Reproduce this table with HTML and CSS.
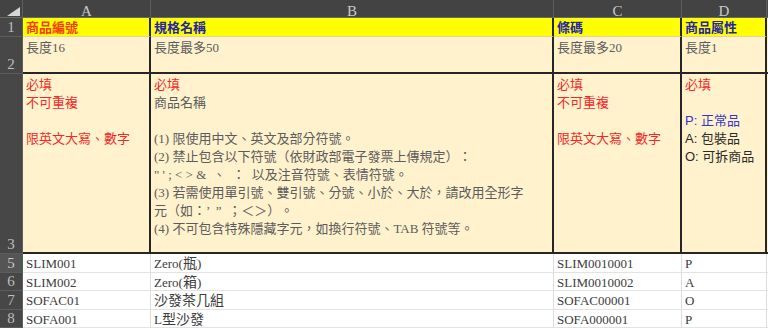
FILE: index.html
```html
<!DOCTYPE html>
<html lang="zh-Hant">
<head>
<meta charset="utf-8">
<title>商品規格</title>
<link rel="stylesheet" href="styles.css">
</head>
<body>
<div class="sheet">
  <div class="corner"><span class="tri"></span></div>
  <div class="ch">A</div>
  <div class="ch">B</div>
  <div class="ch">C</div>
  <div class="ch">D</div>
  <div class="ch last"></div>

  <div class="rh">1</div>
  <div class="y orange">商品編號</div>
  <div class="y blue">規格名稱</div>
  <div class="y blue">條碼</div>
  <div class="y blue">商品屬性</div>
  <div class="y end"></div>

  <div class="rh">2</div>
  <div class="b">長度16</div>
  <div class="b">長度最多50</div>
  <div class="b">長度最多20</div>
  <div class="b">長度1</div>
  <div class="b end"></div>

  <div class="rh">3</div>
  <div class="b red">
    <div class="ln">必填</div>
    <div class="ln">不可重複</div>
    <div class="ln"></div>
    <div class="ln">限英文大寫、數字</div>
  </div>
  <div class="b">
    <div class="ln red">必填</div>
    <div class="ln">商品名稱</div>
    <div class="ln"></div>
    <div class="ln">(1) 限使用中文、英文及部分符號。</div>
    <div class="ln">(2) 禁止包含以下符號（依財政部電子發票上傳規定）：</div>
    <div class="ln">" ' ; &lt; &gt; &amp; &nbsp;、 &nbsp;： &nbsp;以及注音符號、表情符號。</div>
    <div class="ln">(3) 若需使用單引號、雙引號、分號、小於、大於，請改用全形字</div>
    <div class="ln">元（如：’ &nbsp;” &nbsp;；＜＞）。</div>
    <div class="ln">(4) 不可包含特殊隱藏字元，如換行符號、TAB 符號等。</div>
  </div>
  <div class="b red">
    <div class="ln">必填</div>
    <div class="ln">不可重複</div>
    <div class="ln"></div>
    <div class="ln">限英文大寫、數字</div>
  </div>
  <div class="b">
    <div class="ln red">必填</div>
    <div class="ln"></div>
    <div class="ln sans pblue">P: 正常品</div>
    <div class="ln sans dark">A: 包裝品</div>
    <div class="ln sans dark">O: 可拆商品</div>
  </div>
  <div class="b end"></div>

  <div class="rh sel">5</div>
  <div class="d">SLIM001</div>
  <div class="d">Zero(<span class="k">瓶</span>)</div>
  <div class="d">SLIM0010001</div>
  <div class="d">P</div>
  <div class="d end"></div>

  <div class="rh">6</div>
  <div class="d">SLIM002</div>
  <div class="d">Zero(<span class="k">箱</span>)</div>
  <div class="d">SLIM0010002</div>
  <div class="d">A</div>
  <div class="d end"></div>

  <div class="rh">7</div>
  <div class="d">SOFAC01</div>
  <div class="d"><span class="k">沙發茶几組</span></div>
  <div class="d">SOFAC00001</div>
  <div class="d">O</div>
  <div class="d end"></div>

  <div class="rh">8</div>
  <div class="d">SOFA001</div>
  <div class="d">L<span class="k">型沙發</span></div>
  <div class="d">SOFA000001</div>
  <div class="d">P</div>
  <div class="d end"></div>
</div>
</body>
</html>
```

FILE: styles.css
```css
html, body {
  margin: 0;
  padding: 0;
  background: #ffffff;
}

.sheet {
  display: grid;
  grid-template-columns: 23px 128px 403px 128px 85px 1fr;
  grid-template-rows: 18px 19px 37px 180px repeat(4, 18.5px);
  width: 768px;
  height: 328px;
  overflow: hidden;
  text-spacing-trim: space-all;
}

.sheet > div {
  box-sizing: border-box;
  overflow: hidden;
  white-space: nowrap;
}

/* column header */
.corner {
  background: #434343;
  border-right: 1px solid #5e5e5e;
  border-bottom: 1px solid #6a6a5c;
  display: flex;
  align-items: flex-end;
  justify-content: flex-end;
  padding: 0 2px 1px 0;
}

.tri {
  width: 0;
  height: 0;
  border-left: 13px solid transparent;
  border-bottom: 9px solid #d6d6d6;
}

.ch {
  background: #434343;
  color: #c9c9c9;
  border-right: 1px solid #5e5e5e;
  border-bottom: 1px solid #6a6a5c;
  text-align: center;
  font: 15px/18px "Liberation Serif", serif;
  padding-top: 2px;
}

.ch.last {
  background: #4a4a4a;
  border-right: none;
}

/* row header */
.rh {
  background: #474747;
  color: #bdbdbd;
  border-right: 1px solid #5e5e5e;
  border-bottom: 1px solid #5c5c5c;
  display: flex;
  align-items: flex-end;
  justify-content: center;
  font: 15px/18px "Liberation Serif", serif;
}

.rh.sel {
  background: #555555;
  color: #c8c8c8;
  border-right: 1px solid #3f6a52;
}

/* yellow title row */
.y {
  background: #ffff00;
  border-right: 2px solid #262626;
  border-bottom: 1px solid #e0d59a;
  padding: 1px 3px 0;
  font: bold 13px/18px "Liberation Sans", "Noto Sans CJK TC", sans-serif;
}

.y.end {
  background: #fff6c8;
  border-right: none;
}

.orange { color: #f53c0c; }
.blue { color: #2424a8; }

/* beige spec rows */
.b {
  background: #fff2cc;
  border-right: 2px solid #262626;
  border-bottom: 2px solid #262626;
  padding: 2px 3px 0;
  font: 13px/18px "Liberation Serif", "Noto Sans CJK TC", serif;
  color: #5c5c5c;
}

.b.end {
  border-right: none;
}

.ln {
  height: 18px;
}

.red { color: #f02a2a; }

.sans {
  font-family: "Liberation Sans", "Noto Sans CJK TC", sans-serif;
}

.pblue { color: #3535cc; }
.dark { color: #2a2a2a; }

/* data rows */
.d {
  background: #ffffff;
  border-right: 1px solid #dcdcdc;
  border-bottom: 1px solid #e3e3e3;
  padding: 1px 3px 0;
  font: 13px/17px "Liberation Serif", "Noto Sans CJK TC", serif;
  color: #3c3c3c;
}

.d.end {
  border-right: none;
}

.k {
  font-size: 14px;
}
```
